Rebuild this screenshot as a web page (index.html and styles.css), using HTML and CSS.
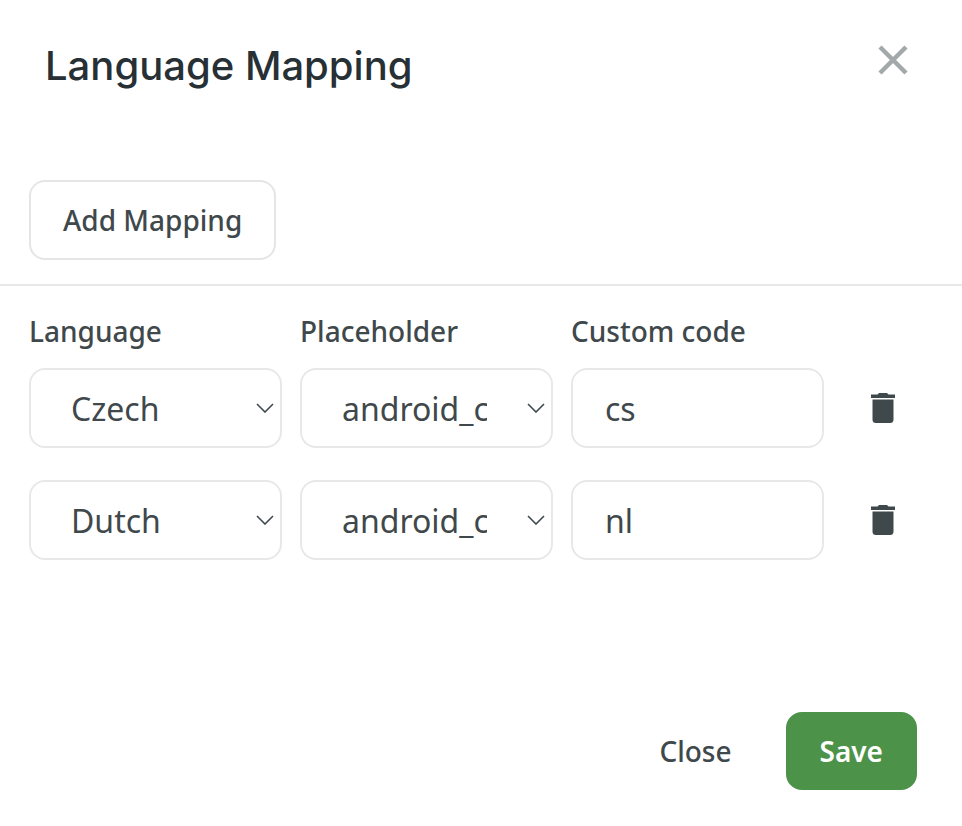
FILE: index.html
```html
<!DOCTYPE html>
<html lang="en">
<head>
<meta charset="utf-8">
<meta name="viewport" content="width=device-width, initial-scale=1">
<title>Language Mapping</title>
<link rel="stylesheet" href="styles.css">
</head>
<body>
<main class="dialog">
  <header class="dialog-header">
    <h1 class="title">Language Mapping</h1>
    <button class="dismiss" type="button" aria-label="Dismiss">
      <svg width="30" height="30" viewBox="0 0 30 30" aria-hidden="true"><path d="M2 2L28 28M28 2L2 28" fill="none" stroke="currentColor" stroke-width="4.500"/></svg>
    </button>
  </header>
  <div class="toolbar">
    <button class="button button-outline" type="button">Add Mapping</button>
  </div>
  <form class="mappings" id="mapping-form">
    <div class="row row-labels">
      <label for="language-1">Language</label>
      <label for="placeholder-1">Placeholder</label>
      <label for="code-1">Custom code</label>
    </div>
    <div class="row">
      <div class="select">
        <select class="field" id="language-1"><option>Czech</option></select>
        <svg class="chevron" width="18" height="10" viewBox="0 0 18 10" aria-hidden="true"><path d="M1 1L9 9L17 1" fill="none" stroke="currentColor" stroke-width="1.600"/></svg>
      </div>
      <div class="select">
        <select class="field" id="placeholder-1"><option>android_code</option></select>
        <svg class="chevron" width="18" height="10" viewBox="0 0 18 10" aria-hidden="true"><path d="M1 1L9 9L17 1" fill="none" stroke="currentColor" stroke-width="1.600"/></svg>
      </div>
      <input class="field" id="code-1" type="text" value="cs">
      <button class="delete" type="button" aria-label="Delete Czech mapping">
        <svg width="24" height="30" viewBox="0 0 24 30" aria-hidden="true"><path d="M0 1.500H6.500L8 0H16L17.500 1.500H24V5H0ZM1.500 6.500H22.500V26.500Q22.500 30 19 30H5Q1.500 30 1.500 26.500Z" fill="currentColor"/></svg>
      </button>
    </div>
    <div class="row">
      <div class="select">
        <select class="field" aria-label="Language" id="language-2"><option>Dutch</option></select>
        <svg class="chevron" width="18" height="10" viewBox="0 0 18 10" aria-hidden="true"><path d="M1 1L9 9L17 1" fill="none" stroke="currentColor" stroke-width="1.600"/></svg>
      </div>
      <div class="select">
        <select class="field" aria-label="Placeholder" id="placeholder-2"><option>android_code</option></select>
        <svg class="chevron" width="18" height="10" viewBox="0 0 18 10" aria-hidden="true"><path d="M1 1L9 9L17 1" fill="none" stroke="currentColor" stroke-width="1.600"/></svg>
      </div>
      <input class="field" aria-label="Custom code" id="code-2" type="text" value="nl">
      <button class="delete" type="button" aria-label="Delete Dutch mapping">
        <svg width="24" height="30" viewBox="0 0 24 30" aria-hidden="true"><path d="M0 1.500H6.500L8 0H16L17.500 1.500H24V5H0ZM1.500 6.500H22.500V26.500Q22.500 30 19 30H5Q1.500 30 1.500 26.500Z" fill="currentColor"/></svg>
      </button>
    </div>
  </form>
  <footer class="actions">
    <button class="button" type="button">Close</button>
    <button class="button button-primary" type="submit" form="mapping-form">Save</button>
  </footer>
</main>
</body>
</html>
```
FILE: styles.css
```css
* {
  box-sizing: border-box;
}

body {
  margin: 0;
  background: #fff;
  color: #3f484b;
  font: 500 28px/40px "Noto Sans", sans-serif;
}

button,
input,
select {
  margin: 0;
  font: inherit;
  color: inherit;
}

.dialog-header {
  display: flex;
  align-items: flex-start;
  justify-content: space-between;
  padding: 40px 54px 0 45px;
}

.title {
  margin: 0;
  color: #263035;
  font: 500 40px/52px Inter, sans-serif;
}

.dismiss,
.delete {
  display: flex;
  padding: 0;
  border: 0;
  background: none;
}

.dismiss {
  padding-top: 5px;
  color: #a3a8ab;
}

.toolbar {
  padding: 88px 29px 24px;
  border-bottom: 2px solid #e8e8e8;
}

.button {
  padding: 18px 32px;
  border: 2px solid transparent;
  border-radius: 16px;
  background: none;
}

.button-outline {
  border-color: #e5e5e5;
}

.button-primary {
  border-color: #4d9249;
  background: #4d9249;
  color: #fff;
  font-weight: 600;
}

.mappings {
  display: flex;
  flex-direction: column;
  gap: 32px;
  padding: 25px 38px 0 29px;
}

.row {
  display: grid;
  grid-template-columns: repeat(3, minmax(0, 1fr)) 82px;
  gap: 18px;
  align-items: center;
}

.row-labels {
  margin-bottom: -15px;
}

.select {
  position: relative;
}

.field {
  display: block;
  width: 100%;
  height: 80px;
  padding: 0 32px;
  border: 2px solid #e8e8e8;
  border-radius: 16px;
  background: #fff;
  font-size: 32px;
  font-weight: 400;
}

select.field {
  appearance: none;
  padding: 2px 64px 0 40px;
}

.chevron {
  position: absolute;
  top: 35px;
  right: 8px;
  pointer-events: none;
}

.delete {
  justify-self: center;
}

.actions {
  display: flex;
  justify-content: flex-end;
  gap: 20px;
  padding: 152px 45px 36px;
  line-height: 38px;
}
```
